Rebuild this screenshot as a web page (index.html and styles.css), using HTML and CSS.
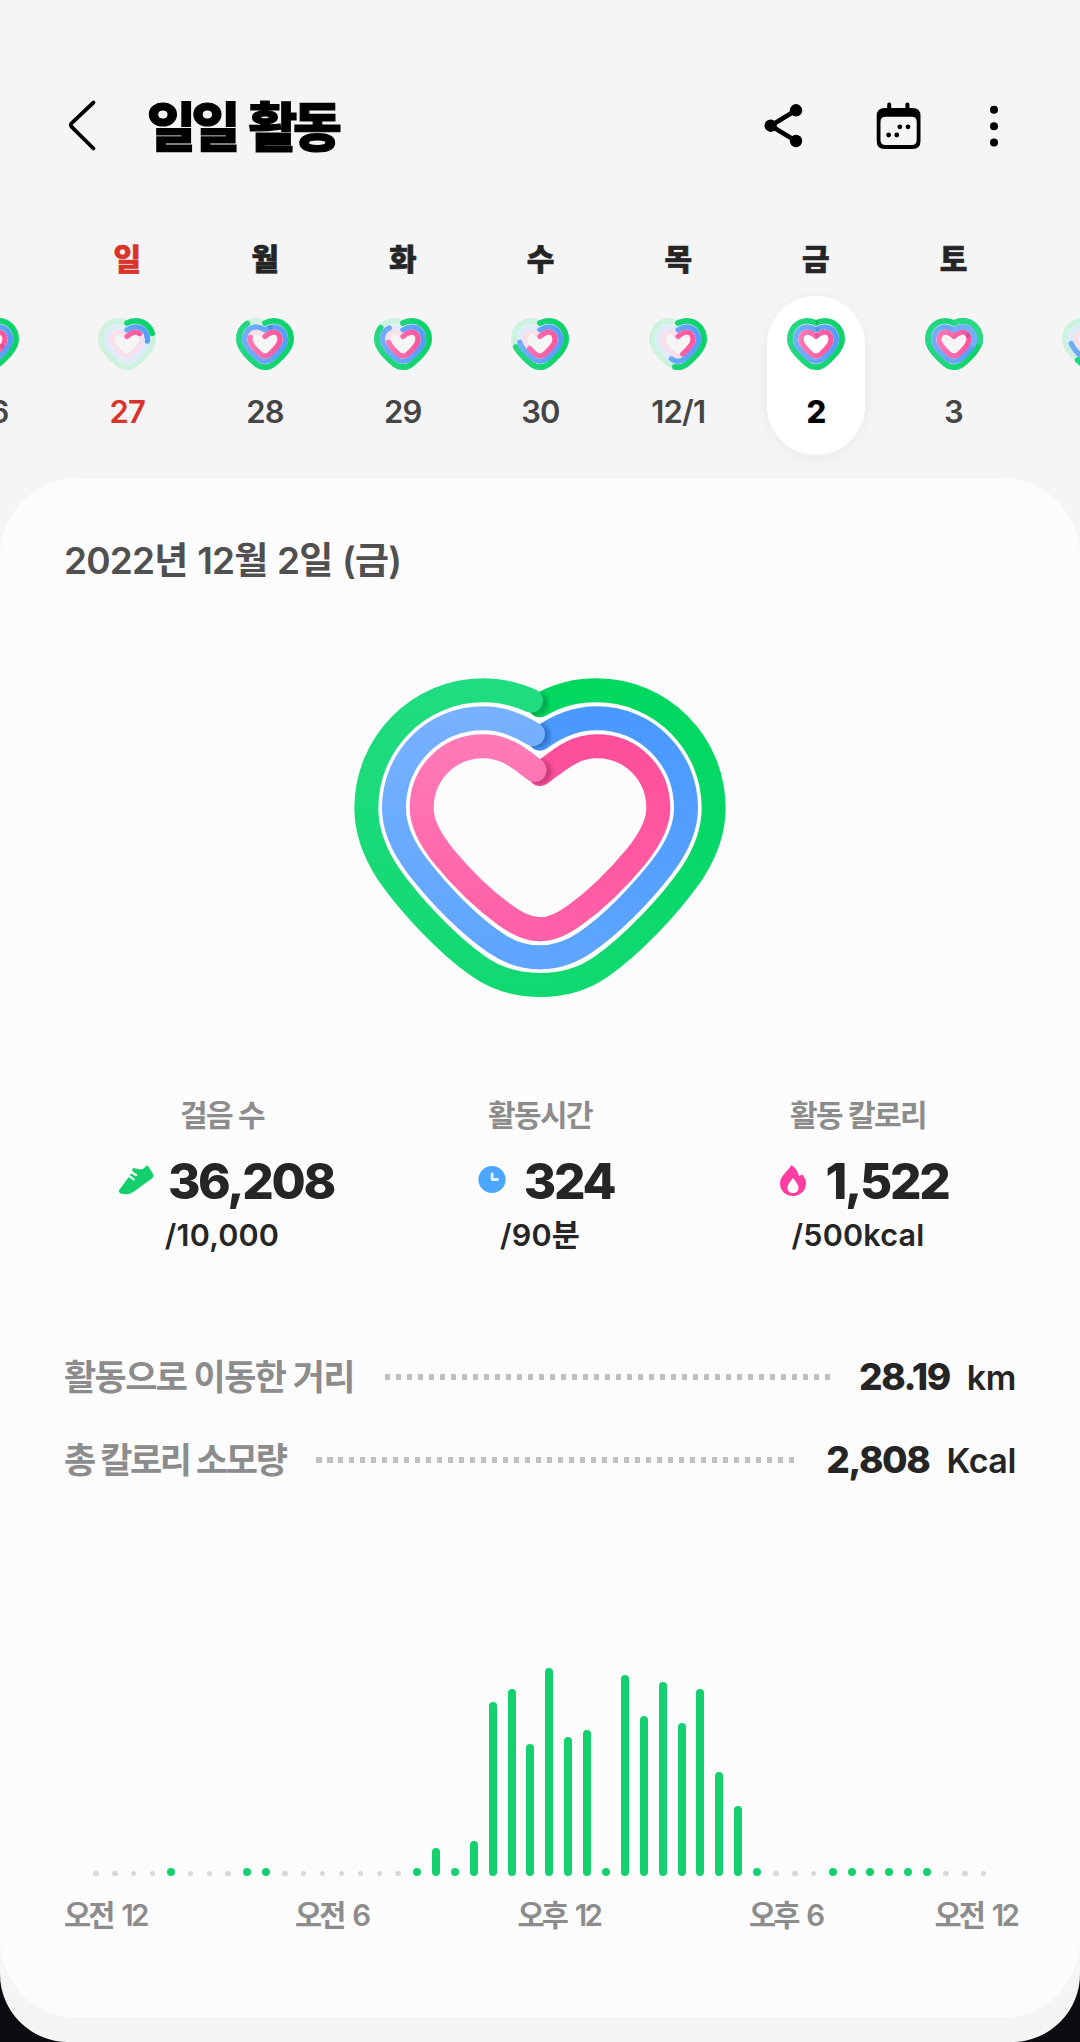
FILE: index.html
```
<!DOCTYPE html>
<html lang="ko">
<head>
<meta charset="utf-8">
<title>일일 활동</title>
<link rel="stylesheet" href="styles.css">
</head>
<body>
<svg class="defs" width="0" height="0" aria-hidden="true">
  <defs>
    <linearGradient id="mini-green" gradientUnits="userSpaceOnUse" x1="58" y1="0" x2="2" y2="0"><stop offset="0" stop-color="#0bd267"/><stop offset="1" stop-color="#27d884"/></linearGradient>
    <linearGradient id="mini-blue" gradientUnits="userSpaceOnUse" x1="52" y1="0" x2="8" y2="0"><stop offset="0" stop-color="#559dfb"/><stop offset="1" stop-color="#72aefb"/></linearGradient>
    <linearGradient id="mini-pink" gradientUnits="userSpaceOnUse" x1="47" y1="0" x2="13" y2="0"><stop offset="0" stop-color="#fa559d"/><stop offset="1" stop-color="#fb78b4"/></linearGradient>
    <path id="hg" pathLength="100" d="M30 6C32.5 4.6 35.5 3.8 38.6 3.8C48.3 3.8 56.1 11.8 56.1 22.3C56.1 28.5 53 32.5 49.5 36.6C46 40.5 42 44.5 38.5 47.2C35.5 49.5 33 50.2 30 50.2C27 50.2 24.5 49.5 21.5 47.2C18 44.5 14 40.5 10.5 36.6C7 32.5 3.9 28.5 3.9 22.3C3.9 11.8 11.7 3.8 21.4 3.8C24.5 3.8 27.5 4.6 30 6"/>
    <path id="hb" pathLength="100" d="M30 12.8C32.5 11 35.5 9.8 38.6 9.8C45.5 9.8 50.5 15.5 50.5 22.3C50.5 27 48 30.5 45 34C42 37.5 39 40 36.5 42C34 44 32 44.4 30 44.4C28 44.4 26 44 23.5 42C21 40 18 37.5 15 34C12 30.5 9.5 27 9.5 22.3C9.5 15.5 14.5 9.8 21.4 9.8C24.5 9.8 27.5 11 30 12.8"/>
    <path id="hp" pathLength="100" d="M30 19.5C32.5 17.3 35 15.2 38.6 15.2C42.3 15.2 45 18.3 45 22.3C45 25.5 43 28.5 40.8 31C38.5 33.6 36.5 35.6 34.5 37.2C32.8 38.6 31.5 39 30 39C28.5 39 27.2 38.6 25.5 37.2C23.5 35.6 21.5 33.6 19.2 31C17 28.5 15 25.5 15 22.3C15 18.3 17.7 15.2 21.4 15.2C25 15.2 27.5 17.3 30 19.5"/>
    <g id="track"><use href="#hg" class="tg"/><use href="#hb" class="tb"/><use href="#hp" class="tp"/></g>
  </defs>
</svg>
<main class="screen">
  <header class="topbar">
    <svg class="back" width="40" height="56" viewBox="0 0 40 56"><path d="M29.5 5.5L7.7 26.2Q5.8 28 7.7 29.8L29.5 51.5"/></svg>
    <h1>일일 활동</h1>
    <svg class="ico-share" width="44" height="48" viewBox="0 0 44 48"><path d="M34 8.3L8.7 23.7L34 39"/><circle cx="34" cy="8.3" r="6.2"/><circle cx="8.7" cy="23.7" r="6.2"/><circle cx="34" cy="39" r="6.2"/></svg>
    <svg class="ico-cal" width="48" height="50" viewBox="0 0 48 50"><path fill-rule="evenodd" d="M10.7 7H38.5Q46.5 7 46.5 15V40Q46.5 48 38.5 48H10.7Q2.7 48 2.7 40V15Q2.7 7 10.7 7ZM11.5 15.7Q6.5 15.7 6.5 20.7V39Q6.5 44 11.500 44H37.700Q42.700 44 42.700 39V20.700Q42.700 15.700 37.700 15.700Z"/><path class="tabs" d="M15.200 3.500V9M33.400 3.500V9"/><circle cx="25.8" cy="25.800" r="2.400"/><circle cx="34" cy="25.800" r="2.400"/><circle cx="14.600" cy="34" r="2.400"/><circle cx="22.800" cy="34" r="2.400"/></svg>
    <svg class="ico-more" width="10" height="44" viewBox="0 0 10 44"><circle cx="5" cy="5.700" r="4"/><circle cx="5" cy="22.200" r="4"/><circle cx="5" cy="38.500" r="4"/></svg>
  </header>

  <section class="week">
    <div class="day"><b></b><div class="cell">
      <svg width="60" height="54"><use href="#hg" class="ag"/><use href="#hb" class="ab"/><use href="#hp" class="ap"/><use href="#hp" class="seam" style="stroke-dasharray:3 97;stroke-dashoffset:-30"/></svg><span>26</span></div></div>
    <div class="day sun"><b>일</b><div class="cell">
      <svg width="60" height="54"><use href="#track"/><use href="#hg" class="ag" style="stroke-dasharray:20 200"/><use href="#hb" class="ab" style="stroke-dasharray:25 200"/><use href="#hp" class="ap" style="stroke-dasharray:16 200"/></svg><span>27</span></div></div>
    <div class="day"><b>월</b><div class="cell">
      <svg width="60" height="54"><use href="#track"/><use href="#hg" class="ag" style="stroke-dasharray:88 200"/><use href="#hb" class="ab"/><use href="#hb" class="seam" style="stroke-dasharray:4 96;stroke-dashoffset:-3"/><use href="#hp" class="ap" style="stroke-dasharray:79 200"/></svg><span>28</span></div></div>
    <div class="day"><b>화</b><div class="cell">
      <svg width="60" height="54"><use href="#track"/><use href="#hg" class="ag" style="stroke-dasharray:84 200"/><use href="#hb" class="ab" style="stroke-dasharray:88 200"/><use href="#hp" class="ap" style="stroke-dasharray:73 200"/></svg><span>29</span></div></div>
    <div class="day"><b>수</b><div class="cell">
      <svg width="60" height="54"><use href="#track"/><use href="#hg" class="ag" style="stroke-dasharray:71 200"/><use href="#hb" class="ab" style="stroke-dasharray:74 200"/><use href="#hp" class="ap" style="stroke-dasharray:65 200"/></svg><span>30</span></div></div>
    <div class="day"><b>목</b><div class="cell">
      <svg width="60" height="54"><use href="#track"/><use href="#hg" class="ag" style="stroke-dasharray:52 200"/><use href="#hb" class="ab" style="stroke-dasharray:56 200"/><use href="#hp" class="ap" style="stroke-dasharray:44 200"/></svg><span>12/1</span></div></div>
    <div class="day"><b>금</b><div class="cell selected">
      <svg width="60" height="54"><use href="#hg" class="ag"/><use href="#hb" class="ab"/><use href="#hp" class="ap"/><use href="#hg" class="seam" style="stroke-dasharray:1.500 98.500"/><use href="#hb" class="seam" style="stroke-dasharray:2.500 97.500"/><use href="#hp" class="seam" style="stroke-dasharray:3 97"/></svg><span>2</span></div></div>
    <div class="day"><b>토</b><div class="cell">
      <svg width="60" height="54"><use href="#hg" class="ag"/><use href="#hb" class="ab"/><use href="#hp" class="ap"/><use href="#hg" class="light-g"/><use href="#hb" class="light-b"/><use href="#hp" class="seam" style="stroke-dasharray:5 95;stroke-dashoffset:-16"/></svg><span>3</span></div></div>
    <div class="day"><b></b><div class="cell">
      <svg width="60" height="54"><use href="#track"/><use href="#hg" class="ag" style="stroke-dasharray:60 200"/><use href="#hb" class="ab" style="stroke-dasharray:73 200"/><use href="#hp" class="ap" style="stroke-dasharray:60 200"/></svg></div></div>
  </section>

  <article class="card">
    <h2>2022년 12월 2일 (금)</h2>
    <svg class="heart" width="400" height="360" viewBox="0 0 1200 1080">
      <defs>
        <linearGradient id="gr" gradientUnits="userSpaceOnUse" x1="0" y1="91" x2="0" y2="975"><stop offset="0" stop-color="#00d860"/><stop offset=".4" stop-color="#05d766"/><stop offset="1" stop-color="#11d971"/></linearGradient>
        <linearGradient id="gl" gradientUnits="userSpaceOnUse" x1="0" y1="91" x2="0" y2="975"><stop offset="0" stop-color="#20dc80"/><stop offset="1" stop-color="#11d971"/></linearGradient>
        <linearGradient id="br" gradientUnits="userSpaceOnUse" x1="0" y1="175" x2="0" y2="892"><stop offset="0" stop-color="#4a99ff"/><stop offset="1" stop-color="#5da5ff"/></linearGradient>
        <linearGradient id="bl" gradientUnits="userSpaceOnUse" x1="0" y1="175" x2="0" y2="892"><stop offset="0" stop-color="#77b1ff"/><stop offset="1" stop-color="#5da5ff"/></linearGradient>
        <linearGradient id="pr" gradientUnits="userSpaceOnUse" x1="0" y1="259" x2="0" y2="808"><stop offset="0" stop-color="#ff4f9a"/><stop offset="1" stop-color="#ff60a7"/></linearGradient>
        <linearGradient id="pl" gradientUnits="userSpaceOnUse" x1="0" y1="259" x2="0" y2="808"><stop offset="0" stop-color="#ff7ab6"/><stop offset="1" stop-color="#ff60a7"/></linearGradient>
        <filter id="soft" x="-50%" y="-50%" width="200%" height="200%"><feGaussianBlur stdDeviation="7"/></filter>
        <path id="rg" d="M600 136C650 106 710 91 770 91C965 91 1121 250 1121 445C1121 515 1094 582 1056 640C990 735 880 852 785 919C730 958 665 975 600 975"/>
        <path id="rb" d="M600 236C650 199 705 175 770 175C920 175 1038 295 1038 445C1038 512 1003 573 967 620C900 707 812 795 735 848C690 879 650 892 600 892"/>
        <path id="rp" d="M600 342C650 308 695 259 770 259C875 259 955 340 955 445C955 495 922 548 888 590C830 660 760 726 705 765C667 793 635 808 600 808"/>
        <mask id="mg"><use href="#rg" class="m"/></mask>
        <mask id="mb"><use href="#rb" class="m"/></mask>
        <mask id="mp"><use href="#rp" class="m"/></mask>
      </defs>
      <use href="#rb" class="gap"/><use href="#rb" class="gap" transform="matrix(-1 0 0 1 1200 0)"/>
      <use href="#rg" stroke="url(#gr)"/>
      <g mask="url(#mg)"><circle cx="586" cy="130" r="38" class="shade" fill="#006b35"/></g>
      <path stroke="url(#gl)" d="M600 975C535 975 470 958 415 919C320 852 210 735 144 640C106 582 79 515 79 445C79 250 235 91 430 91C480 91 528 101 573 122"/>
      <use href="#rb" stroke="url(#br)"/>
      <g mask="url(#mb)"><circle cx="592" cy="228" r="38" class="shade" fill="#103f85"/></g>
      <path stroke="url(#bl)" d="M600 892C550 892 510 879 465 848C388 795 300 707 233 620C197 573 162 512 162 445C162 295 280 175 430 175C485 175 534 194 579 222"/>
      <use href="#rp" stroke="url(#pr)"/>
      <g mask="url(#mp)"><circle cx="597" cy="336" r="38" class="shade" fill="#88174c"/></g>
      <path stroke="url(#pl)" d="M600 808C565 808 533 793 495 765C440 726 370 660 312 590C278 548 245 495 245 445C245 340 325 259 430 259C500 259 542 299 584 330"/>
    </svg>

    <section class="stats">
      <div class="stat"><p class="label">걸음 수</p>
        <div class="value"><svg width="36" height="32" viewBox="0 0 36 32"><path fill="#14d06c" d="M15 6.200Q13.700 5.800 14.400 4.200Q15 2.600 16.500 3.200Q22.500 5.200 25.300 3.700Q27 2.500 28.300 .8Q29.400 0 30.200 1.200L34.700 8.200Q36.200 11 34.200 13.200L16 26.500Q12.500 29.200 8 29.200Q2.800 29.500 1.100 27.300Q.2 25.400 2.400 23.200Z"/><path class="lace" d="M14 7.500L18.200 10.200M11.200 11L15.700 14.500"/></svg><strong>36,208</strong></div>
        <p class="goal">/10,000</p></div>
      <div class="stat"><p class="label">활동시간</p>
        <div class="value"><svg width="36" height="32" viewBox="0 0 36 32"><circle cx="18" cy="14.500" r="13.600" fill="#4ba6ff"/><path class="hands" d="M18.100 9V14.500H23.500"/></svg><strong>324</strong></div>
        <p class="goal">/90분</p></div>
      <div class="stat"><p class="label">활동 칼로리</p>
        <div class="value"><svg width="36" height="32" viewBox="0 0 36 32"><path fill="#ff3da3" fill-rule="evenodd" d="M16.700 0C20.500 3 23.300 6.800 24 11Q25.800 10.300 27.500 9.700C29.700 12.200 31 15 31 18C31 25.500 25.500 31 18 31C10.500 31 5 25.500 5 18.500C5 11 12.500 6.500 16.700 0ZM18 13C15.500 16.500 12.500 19.500 12.500 23C12.500 26 15 28 18 28C21 28 23.500 26 23.500 23C23.500 19.500 20.500 16.500 18 13Z"/></svg><strong>1,522</strong></div>
        <p class="goal">/500kcal</p></div>
    </section>

    <dl class="totals">
      <div><dt>활동으로 이동한 거리</dt><dd class="dots"></dd><dd><b>28.19</b><span>km</span></dd></div>
      <div class="burned"><dt>총 칼로리 소모량</dt><dd class="dots"></dd><dd><b>2,808</b><span>Kcal</span></dd></div>
    </dl>

    <section class="chart">
      <i></i><i></i><i></i><i></i><i class="on"></i><i></i><i></i><i></i><i class="on"></i><i class="on"></i><i></i><i></i><i></i><i></i><i></i><i></i><i></i><i class="on"></i><i class="on" style="height:28px"></i><i class="on"></i><i class="on" style="height:35px"></i><i class="on" style="height:174px"></i><i class="on" style="height:187.500px"></i><i class="on" style="height:132.500px"></i><i class="on" style="height:208.500px"></i><i class="on" style="height:139px"></i><i class="on" style="height:146px"></i><i class="on"></i><i class="on" style="height:201.500px"></i><i class="on" style="height:160px"></i><i class="on" style="height:194.500px"></i><i class="on" style="height:153px"></i><i class="on" style="height:187.500px"></i><i class="on" style="height:104px"></i><i class="on" style="height:70px"></i><i class="on"></i><i></i><i></i><i></i><i class="on"></i><i class="on"></i><i class="on"></i><i class="on"></i><i class="on"></i><i class="on"></i><i></i><i></i><i></i>
    </section>
    <div class="axis"><span>오전 12</span><span>오전 6</span><span>오후 12</span><span>오후 6</span><span>오전 12</span></div>
  </article>
</main>
</body>
</html>
```
FILE: styles.css
```
* { box-sizing: border-box; }
body { margin: 0; background: #0c0d10; font-family: Inter, "Noto Sans CJK KR", sans-serif; color: #252525; }
h1, h2, p, dl, dd { margin: 0; }
svg { display: block; flex: none; }
.defs { position: absolute; }
.screen { width: 1080px; height: 2042px; background: #f5f5f5; border-radius: 0 0 68px 68px; overflow: hidden; }

.topbar { display: flex; align-items: center; height: 176px; padding: 76px 81px 0 64px; }
.back path { fill: none; stroke: #000; stroke-width: 3.8; stroke-linecap: round; }
.back { margin-top: -3px; }
h1 { margin: 3px auto 0 43px; color: #000; font-size: 53px; font-weight: 900; line-height: 80px; letter-spacing: -4.2px; word-spacing: 6px; white-space: nowrap; -webkit-text-stroke: 1.2px #000; }
.ico-share path { fill: none; stroke: #000; stroke-width: 4.6; }
.ico-cal { margin-left: 68px; }
.ico-cal .tabs { fill: none; stroke: #000; stroke-width: 4; stroke-linecap: round; }
.ico-more { margin-left: 67px; }

.week { display: flex; width: 1239.3px; margin-left: -79.2px; height: 302px; padding-top: 63px; }
.day { flex: 1; display: flex; flex-direction: column; align-items: center; }
.day b { height: 40px; line-height: 40px; font-size: 30px; font-weight: 900; -webkit-text-stroke: 0.6px; }
.cell { display: flex; flex-direction: column; align-items: center; width: 98px; height: 159px; margin-top: 17px; padding-top: 21px; border-radius: 49px; }
.cell span { margin-top: 21px; line-height: 40px; font-size: 31px; font-weight: 600; letter-spacing: -0.8px; color: #454545; white-space: nowrap; }
.sun b, .sun .cell span { color: #d8342b; }
.cell.selected { background: #fff; box-shadow: 0 3px 16px rgba(0, 0, 0, 0.05); }
.cell.selected span { color: #000; font-weight: 800; }
.cell use { fill: none; stroke-linecap: round; stroke-linejoin: round; }
.tg, .ag, .light-g { stroke-width: 5.8; }
.tb, .ab, .light-b { stroke-width: 5.3; }
.tp, .ap { stroke-width: 5.3; }
.tg { stroke: #cdf3df; }
.tb { stroke: #deebf9; }
.tp { stroke: #f8e0eb; }
.ag { stroke: url(#mini-green); }
.ab { stroke: url(#mini-blue); }
.ap { stroke: url(#mini-pink); }
.light-g { stroke: #27d884; stroke-dasharray: 26 200; }
.light-b { stroke: #72aefb; stroke-dasharray: 28 200; }
.cell .seam { stroke: rgba(20, 30, 90, 0.16); stroke-width: 4.6; stroke-linecap: butt; }

.card { height: 1540px; padding: 53px 64px 0; border-radius: 78px; background: #fcfcfc; }
h2 { line-height: 60px; font-size: 37px; font-weight: 600; letter-spacing: -0.8px; word-spacing: 1px; color: #505050; white-space: nowrap; }
.heart { margin: 69px auto 0; }
.heart use, .heart > path { fill: none; stroke-width: 72; stroke-linecap: round; stroke-linejoin: round; }
.heart .m { stroke: #fff; }
.heart .gap { stroke: #fff; stroke-width: 96; }
.shade { opacity: 0.42; filter: url(#soft); }

.stats { display: grid; grid-template-columns: repeat(3, 318px); justify-content: center; margin-top: 75px; text-align: center; }
.label { line-height: 40px; font-size: 30px; font-weight: 600; letter-spacing: -1.6px; color: #8c8c8c; }
.value { display: flex; justify-content: center; align-items: center; gap: 14px; height: 60px; margin-top: 16px; padding-left: 8px; }
.value strong { font-size: 49.5px; line-height: 60px; font-weight: 800; letter-spacing: -2.3px; }
.lace { fill: none; stroke: #fcfcfc; stroke-width: 2.2; stroke-linecap: round; }
.hands { fill: none; stroke: #e6f3ff; stroke-width: 2.8; stroke-linecap: round; stroke-linejoin: round; }
.goal { margin-top: 4px; line-height: 40px; font-size: 30.5px; font-weight: 600; letter-spacing: 0.2px; }

.totals { margin-top: 79.5px; }
.totals div { display: flex; align-items: center; height: 83px; white-space: nowrap; }
.totals dt { margin-top: -3px; font-size: 35px; font-weight: 600; letter-spacing: -1.6px; color: #8c8c8c; }
.totals .burned dt { letter-spacing: -2.4px; }
.totals dd { display: flex; align-items: baseline; }
.totals b { font-size: 37px; font-weight: 800; letter-spacing: -1.4px; }
.totals span { margin-left: 17px; font-size: 34px; font-weight: 600; letter-spacing: -0.4px; }
.totals .dots { flex: 1; height: 6px; margin: 2px 29px 0 31px; background: repeating-linear-gradient(90deg, #c0c0c0 0 5.5px, transparent 5.5px 11px); }

.chart { display: grid; grid-template-columns: repeat(48, 1fr); align-items: end; justify-items: center; width: 906.7px; height: 216px; margin: 159.5px 0 0 22.5px; }
.chart i { width: 5.5px; height: 5.5px; border-radius: 4px; background: #d8d8d8; }
.chart .on { width: 8px; height: 8px; background: #14d06f; }
.axis { display: grid; grid-template-columns: 231px 222.5px 231.5px 1fr auto; margin: 19px -1px 0 0; line-height: 40px; font-size: 29.5px; font-weight: 600; letter-spacing: -2.8px; word-spacing: 4px; color: #8c8c8c; white-space: nowrap; }
```
